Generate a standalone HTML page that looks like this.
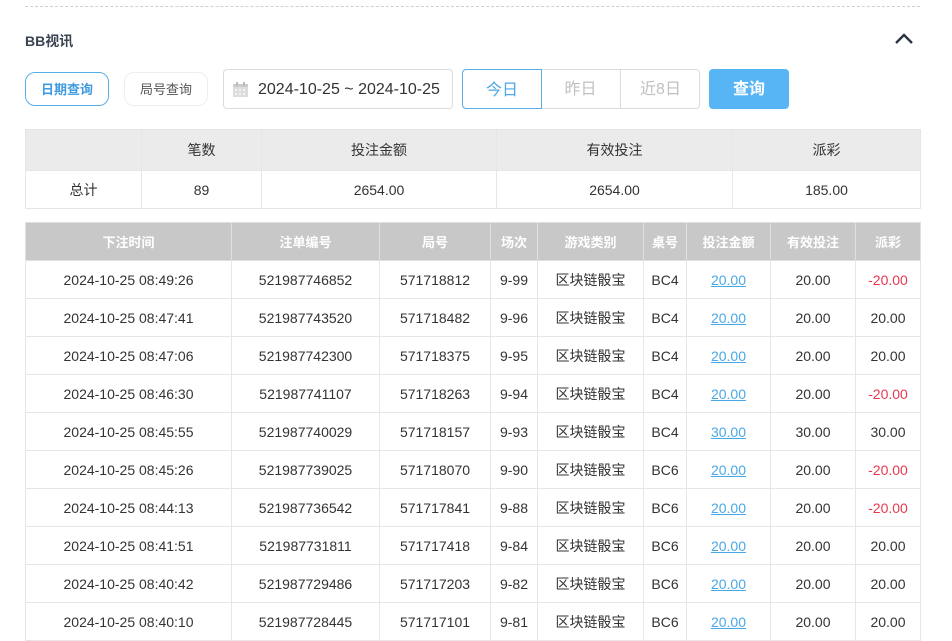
<!DOCTYPE html>
<html><head><meta charset="utf-8"><style>
*{box-sizing:border-box;margin:0;padding:0}
body{width:952px;height:632px;overflow:hidden;background:#fff;font-family:"Liberation Sans","Noto Sans CJK SC",sans-serif;color:#333;position:relative}
.abs{position:absolute}
table{border-collapse:collapse;table-layout:fixed;position:absolute}
td,th{text-align:center;font-size:14px;font-weight:normal;border:1px solid #e6e6e6}
.sum th{background:#ebebeb;height:41px;color:#333}
.sum td{height:38px}
.det th{background:#c8c8c8;color:#fff;height:38px;font-size:13px;font-weight:bold;border-color:#e0e0e0}
.det td{height:38px}
.l{color:#4aa8e6;text-decoration:underline}
.r{color:#e8384f}
</style></head><body>
<div class="abs" style="left:25px;top:6px;width:895px;border-top:1px dashed #d0d0d0"></div>
<div class="abs" style="left:25px;top:31px;font-size:14px;font-weight:bold;color:#3a4453">BB视讯</div>
<svg class="abs" style="left:894px;top:32px" width="20" height="14" viewBox="0 0 20 14"><path d="M2 11 L10 3 L18 11" fill="none" stroke="#2c3440" stroke-width="2.4"/></svg>
<div class="abs" style="left:25px;top:72px;width:84px;height:34px;border:1px solid #5aaee8;border-radius:10px;color:#3f9be0;font-size:13px;font-weight:bold;line-height:33px;text-align:center">日期查询</div>
<div class="abs" style="left:124px;top:72px;width:84px;height:34px;border:1px solid #eee;border-radius:10px;color:#555;font-size:13px;line-height:33px;text-align:center">局号查询</div>
<div class="abs" style="left:223px;top:69px;width:230px;height:40px;border:1px solid #dcdcdc;border-radius:4px"></div>
<svg class="abs" style="left:232px;top:81px" width="17" height="17" viewBox="0 0 17 17"><rect x="1" y="3" width="15" height="13" fill="#ddd"/><rect x="1" y="3" width="15" height="3" fill="#ccc"/><rect x="4" y="1" width="2" height="4" fill="#bbb"/><rect x="11" y="1" width="2" height="4" fill="#bbb"/><g fill="#f4f4f4"><rect x="3" y="8" width="2" height="2"/><rect x="7" y="8" width="2" height="2"/><rect x="11" y="8" width="2" height="2"/><rect x="3" y="12" width="2" height="2"/><rect x="7" y="12" width="2" height="2"/><rect x="11" y="12" width="2" height="2"/></g></svg>
<div class="abs" style="left:258px;top:81px;font-size:16px;color:#333">2024-10-25 ~ 2024-10-25</div>
<div class="abs" style="left:462px;top:69px;width:238px;height:40px;border:1px solid #dcdcdc;border-radius:4px"></div>
<div class="abs" style="left:462px;top:69px;width:80px;height:40px;border:1px solid #5aaee8;border-radius:4px 0 0 4px;color:#4aa8e6;font-size:16px;line-height:41px;text-align:center">今日</div>
<div class="abs" style="left:541px;top:69px;width:80px;height:40px;border-right:1px solid #dcdcdc;color:#c0c0c0;font-size:16px;line-height:42px;text-align:center">昨日</div>
<div class="abs" style="left:621px;top:69px;width:79px;height:40px;color:#c0c0c0;font-size:16px;line-height:42px;text-align:center">近8日</div>
<div class="abs" style="left:709px;top:69px;width:80px;height:40px;background:#57b5f6;border-radius:4px;color:#fff;font-size:16px;font-weight:bold;line-height:41px;text-align:center">查询</div>

<table class="sum" style="left:25px;top:129px;width:895px">
<colgroup><col style="width:116px"><col style="width:120px"><col style="width:235px"><col style="width:236px"><col style="width:188px"></colgroup>
<tr><th></th><th>笔数</th><th>投注金额</th><th>有效投注</th><th>派彩</th></tr>
<tr><td>总计</td><td>89</td><td>2654.00</td><td>2654.00</td><td>185.00</td></tr>
</table>

<table class="det" style="left:25px;top:222px;width:895px">
<colgroup><col style="width:206px"><col style="width:148px"><col style="width:111px"><col style="width:47px"><col style="width:106px"><col style="width:43px"><col style="width:84px"><col style="width:85px"><col style="width:65px"></colgroup>
<tr><th>下注时间</th><th>注单编号</th><th>局号</th><th>场次</th><th>游戏类别</th><th>桌号</th><th>投注金额</th><th>有效投注</th><th>派彩</th></tr>
<tr><td>2024-10-25 08:49:26</td><td>521987746852</td><td>571718812</td><td>9-99</td><td>区块链骰宝</td><td>BC4</td><td class="l">20.00</td><td>20.00</td><td class="r">-20.00</td></tr>
<tr><td>2024-10-25 08:47:41</td><td>521987743520</td><td>571718482</td><td>9-96</td><td>区块链骰宝</td><td>BC4</td><td class="l">20.00</td><td>20.00</td><td>20.00</td></tr>
<tr><td>2024-10-25 08:47:06</td><td>521987742300</td><td>571718375</td><td>9-95</td><td>区块链骰宝</td><td>BC4</td><td class="l">20.00</td><td>20.00</td><td>20.00</td></tr>
<tr><td>2024-10-25 08:46:30</td><td>521987741107</td><td>571718263</td><td>9-94</td><td>区块链骰宝</td><td>BC4</td><td class="l">20.00</td><td>20.00</td><td class="r">-20.00</td></tr>
<tr><td>2024-10-25 08:45:55</td><td>521987740029</td><td>571718157</td><td>9-93</td><td>区块链骰宝</td><td>BC4</td><td class="l">30.00</td><td>30.00</td><td>30.00</td></tr>
<tr><td>2024-10-25 08:45:26</td><td>521987739025</td><td>571718070</td><td>9-90</td><td>区块链骰宝</td><td>BC6</td><td class="l">20.00</td><td>20.00</td><td class="r">-20.00</td></tr>
<tr><td>2024-10-25 08:44:13</td><td>521987736542</td><td>571717841</td><td>9-88</td><td>区块链骰宝</td><td>BC6</td><td class="l">20.00</td><td>20.00</td><td class="r">-20.00</td></tr>
<tr><td>2024-10-25 08:41:51</td><td>521987731811</td><td>571717418</td><td>9-84</td><td>区块链骰宝</td><td>BC6</td><td class="l">20.00</td><td>20.00</td><td>20.00</td></tr>
<tr><td>2024-10-25 08:40:42</td><td>521987729486</td><td>571717203</td><td>9-82</td><td>区块链骰宝</td><td>BC6</td><td class="l">20.00</td><td>20.00</td><td>20.00</td></tr>
<tr><td>2024-10-25 08:40:10</td><td>521987728445</td><td>571717101</td><td>9-81</td><td>区块链骰宝</td><td>BC6</td><td class="l">20.00</td><td>20.00</td><td>20.00</td></tr>
</table>
</body></html>
